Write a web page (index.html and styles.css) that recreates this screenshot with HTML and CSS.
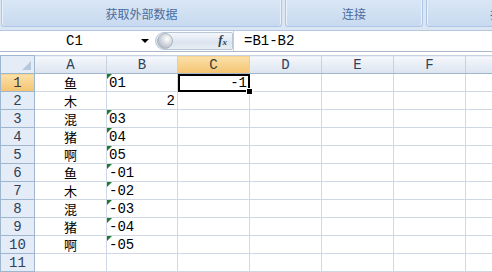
FILE: index.html
```html
<!DOCTYPE html>
<html lang="zh-CN">
<head>
  <meta charset="UTF-8">
  <title>Sheet1</title>
  <link rel="stylesheet" href="styles.css">
</head>
<body>
  <div class="ribbon">
    <div class="group group-data"><span class="label">获取外部数据</span></div>
    <div class="group group-link"><span class="label">连接</span></div>
    <div class="group group-sort"><span class="label">排序和筛选</span></div>
  </div>

  <div class="formula-bar">
    <div class="namebox">
      <span class="cell-ref">C1</span>
      <span class="arrow"></span>
    </div>
    <div class="fx-area">
      <span class="knob"></span>
      <span class="fx">f<sub>x</sub></span>
    </div>
    <div class="formula">=B1-B2</div>
  </div>

  <table class="sheet">
    <colgroup>
      <col class="c-head">
      <col class="c-a"><col class="c-b"><col class="c-c">
      <col class="c-d"><col class="c-e"><col class="c-f"><col class="c-g">
    </colgroup>
    <tr class="col-heads">
      <th class="corner"><span class="corner-tri"></span></th>
      <th>A</th><th>B</th><th class="sel">C</th><th>D</th><th>E</th><th>F</th><th></th>
    </tr>
    <tr>
      <th class="sel">1</th><td class="zh">鱼</td><td class="txt">01</td>
      <td class="num active">-1<span class="handle"></span></td><td></td><td></td><td></td><td></td>
    </tr>
    <tr>
      <th>2</th><td class="zh">木</td><td class="num">2</td><td></td><td></td><td></td><td></td><td></td>
    </tr>
    <tr>
      <th>3</th><td class="zh">混</td><td class="txt">03</td><td></td><td></td><td></td><td></td><td></td>
    </tr>
    <tr>
      <th>4</th><td class="zh">猪</td><td class="txt">04</td><td></td><td></td><td></td><td></td><td></td>
    </tr>
    <tr>
      <th>5</th><td class="zh">啊</td><td class="txt">05</td><td></td><td></td><td></td><td></td><td></td>
    </tr>
    <tr>
      <th>6</th><td class="zh">鱼</td><td class="txt">-01</td><td></td><td></td><td></td><td></td><td></td>
    </tr>
    <tr>
      <th>7</th><td class="zh">木</td><td class="txt">-02</td><td></td><td></td><td></td><td></td><td></td>
    </tr>
    <tr>
      <th>8</th><td class="zh">混</td><td class="txt">-03</td><td></td><td></td><td></td><td></td><td></td>
    </tr>
    <tr>
      <th>9</th><td class="zh">猪</td><td class="txt">-04</td><td></td><td></td><td></td><td></td><td></td>
    </tr>
    <tr>
      <th>10</th><td class="zh">啊</td><td class="txt">-05</td><td></td><td></td><td></td><td></td><td></td>
    </tr>
    <tr>
      <th>11</th><td></td><td></td><td></td><td></td><td></td><td></td><td></td>
    </tr>
  </table>
</body>
</html>
```

FILE: styles.css
```css
body {
  margin: 0;
  width: 492px;
  height: 272px;
  overflow: hidden;
  background: #fff;
  font-family: "Liberation Mono", "Noto Sans CJK SC", monospace;
  font-size: 14px;
  color: #000;
}

/* ribbon strip */
.ribbon {
  display: flex;
  gap: 3px;
  height: 27px;
  padding-bottom: 3px;
  background: #dbe6f4;
  border-bottom: 1px solid #b6c8df;
  overflow: hidden;
}

.group {
  display: flex;
  flex-shrink: 0;
  align-items: flex-end;
  justify-content: center;
  height: 26px;
  background: linear-gradient(#d9e6f5, #c8daf0);
  border: 1px solid #afc6e2;
  border-top: none;
  border-radius: 0 0 3px 3px;
  box-shadow: inset 1px 0 0 #eaf1fa, inset -1px 0 0 #eaf1fa;
}

.group-data { width: 279px; margin-left: 1px; }
.group-link { width: 136px; }
.group-sort { width: 186px; }

.label {
  font-family: "Noto Sans CJK SC", sans-serif;
  font-size: 12px;
  line-height: 20px;
  padding-bottom: 2px;
  color: #4a6c9e;
}

/* formula bar */
.formula-bar {
  display: flex;
  height: 20px;
  background: #fff;
  border-bottom: 1px solid #a9b8cc;
}

.namebox {
  display: flex;
  align-items: center;
  width: 155px;
}

.cell-ref {
  flex: 1;
  text-align: center;
  padding-left: 8px;
}

.arrow {
  width: 0;
  height: 0;
  margin-right: 6px;
  border-left: 4px solid transparent;
  border-right: 4px solid transparent;
  border-top: 4px solid #000;
}

.fx-area {
  display: flex;
  align-items: center;
  justify-content: space-between;
  width: 78px;
  height: 18px;
  margin-top: 1px;
  background: linear-gradient(#f4f7fb, #dbe4ef 60%, #e9eef5);
  border: 1px solid #b9c6d6;
  border-radius: 9px 2px 2px 9px;
  box-sizing: border-box;
}

.knob {
  width: 14px;
  height: 14px;
  margin-left: 1px;
  border-radius: 50%;
  background: radial-gradient(circle at 65% 35%, #ffffff, #c9ced6 55%, #9aa3ae);
  border: 1px solid #aeb6c1;
}

.fx {
  font-family: "Liberation Serif", serif;
  font-style: italic;
  font-weight: bold;
  font-size: 13px;
  line-height: 14px;
  color: #2c3e55;
  margin-right: 5px;
}

.fx sub {
  font-size: 9px;
  vertical-align: -1px;
}

.formula {
  flex: 1;
  padding-left: 10px;
  line-height: 20px;
  border-left: 1px solid #c5ced9;
}

/* grid */
.sheet {
  border-collapse: collapse;
  table-layout: fixed;
  width: 492px;
  margin-top: 3px;
  border-top: 1px solid #9fb1c8;
}

.c-head { width: 34px; }
.c-a, .c-c, .c-d, .c-e, .c-f { width: 72px; }
.c-b { width: 71px; }
.c-g { width: 27px; }

.sheet tr { height: 18px; }

.sheet th {
  padding: 0;
  font-weight: normal;
  font-size: 14px;
  color: #30405a;
  background: linear-gradient(#f6f8fb, #dbe4f0);
  border: 1px solid #c5d2e2;
  border-bottom-color: #9eb6ce;
  line-height: 16px;
}

.sheet tr > th:first-child {
  text-align: center;
  background: #e4ecf7;
  border-color: #9eb6ce;
}

.sheet th.sel,
.sheet tr > th.sel:first-child {
  background: linear-gradient(#fbe1a9, #f3c471);
  color: #3a3a3a;
}

.corner {
  position: relative;
}

.corner-tri {
  position: absolute;
  right: 3px;
  bottom: 3px;
  width: 0;
  height: 0;
  border-left: 9px solid transparent;
  border-bottom: 9px solid #b7c8dc;
}

.sheet td {
  padding: 0 2px;
  border: 1px solid #d0d7e5;
  line-height: 16px;
  white-space: nowrap;
  overflow: hidden;
}

.zh {
  text-align: center;
  font-family: "Noto Sans CJK SC", sans-serif;
  font-size: 13px;
  color: #000;
}

.txt {
  position: relative;
  text-align: left;
}

.txt::before {
  content: "";
  position: absolute;
  top: 0;
  left: 0;
  border-top: 5px solid #1f7a2f;
  border-right: 5px solid transparent;
}

.num {
  text-align: right;
}

.sheet td.active {
  position: relative;
  overflow: visible;
  outline: 2px solid #000;
  outline-offset: -2px;
}

.handle {
  position: absolute;
  right: -4px;
  bottom: -4px;
  width: 5px;
  height: 5px;
  background: #000;
  border: 1px solid #fff;
}
```
